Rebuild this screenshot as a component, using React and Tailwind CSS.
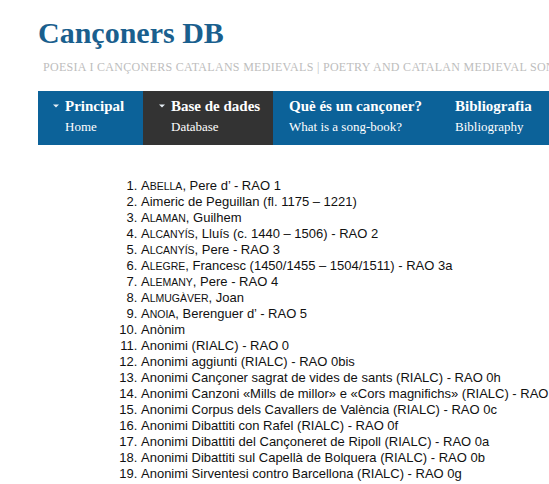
import React from 'react'

const entries = [
  { sc: 'Abella', rest: ', Pere d’ - RAO 1' },
  { text: 'Aimeric de Peguillan (fl. 1175 – 1221)' },
  { sc: 'Alaman', rest: ', Guilhem' },
  { sc: 'Alcanyís', rest: ', Lluís (c. 1440 – 1506) - RAO 2' },
  { sc: 'Alcanyís', rest: ', Pere - RAO 3' },
  { sc: 'Alegre', rest: ', Francesc (1450/1455 – 1504/1511) - RAO 3a' },
  { sc: 'Alemany', rest: ', Pere - RAO 4' },
  { sc: 'Almugàver', rest: ', Joan' },
  { sc: 'Anoia', rest: ', Berenguer d’ - RAO 5' },
  { text: 'Anònim' },
  { text: 'Anonimi (RIALC) - RAO 0' },
  { text: 'Anonimi aggiunti (RIALC) - RAO 0bis' },
  { text: 'Anonimi Cançoner sagrat de vides de sants (RIALC) - RAO 0h' },
  { text: 'Anonimi Canzoni «Mills de millor» e «Cors magnifichs» (RIALC) - RAO 0e' },
  { text: 'Anonimi Corpus dels Cavallers de València (RIALC) - RAO 0c' },
  { text: 'Anonimi Dibattiti con Rafel (RIALC) - RAO 0f' },
  { text: 'Anonimi Dibattiti del Cançoneret de Ripoll (RIALC) - RAO 0a' },
  { text: 'Anonimi Dibattiti sul Capellà de Bolquera (RIALC) - RAO 0b' },
  { text: 'Anonimi Sirventesi contro Barcellona (RIALC) - RAO 0g' },
]

const menu = [
  { ca: 'Principal', en: 'Home', arrow: true, width: 'w-[105px] pl-[15px]' },
  { ca: 'Base de dades', en: 'Database', arrow: true, active: true, width: 'w-[130px] pl-4' },
  { ca: 'Què és un cançoner?', en: 'What is a song-book?', width: 'w-[166px] pl-4' },
  { ca: 'Bibliografia', en: 'Bibliography', width: 'w-[110px] pl-4' },
]

function Arrow() {
  return (
    <svg width="6" height="4" viewBox="0 0 6 4" className="shrink-0">
      <path d="M0 0.5 L6 0.5 L3 3.5 Z" fill="#e6eef4" />
    </svg>
  )
}

function MenuItem({ item }) {
  return (
    <div className={`shrink-0 pt-[5px] pb-[7px] ${item.width} ${item.active ? 'bg-[#333333]' : ''}`}>
      <div className="flex items-center gap-[6px] text-[15px] leading-[20px] font-bold text-white">
        {item.arrow && <Arrow />}
        <span>{item.ca}</span>
      </div>
      <div className={`text-[13px] leading-[22px] text-white ${item.arrow ? 'pl-[12px]' : ''}`}>
        {item.en}
      </div>
    </div>
  )
}

// small caps drawn by hand: first letter full size, rest as smaller capitals
function SmallCaps({ word }) {
  return (
    <>
      {word[0]}
      <span className="text-[10.5px] uppercase">{word.slice(1)}</span>
    </>
  )
}

export default function App() {
  return (
    <div className="w-[549px] h-[484px] overflow-hidden bg-white">
      {/* Header */}
      <div className="pl-[38px] pt-4 whitespace-nowrap font-['Liberation_Serif','Times_New_Roman',serif]">
        <h1 className="text-[30px] leading-[34px] font-bold text-[#1a5f8e]">Cançoners DB</h1>
        <div className="mt-[10px] ml-[5px] text-[12px] leading-[14px] tracking-[0.3px] text-[#bdbdbd]">
          POESIA I CANÇONERS CATALANS MEDIEVALS | POETRY AND CATALAN MEDIEVAL SONG-BOOKS
        </div>
      </div>

      {/* Navigation */}
      <div className="mt-[17px] ml-[38px] flex bg-[#0c6299] whitespace-nowrap font-['Liberation_Serif','Times_New_Roman',serif]">
        {menu.map((item, i) => (
          <MenuItem key={i} item={item} />
        ))}
      </div>

      {/* Authors list */}
      <ol className="mt-[33px] pl-[141px] list-decimal list-outside text-[13px] leading-[16px] text-[#111111] font-['Liberation_Sans',Arial,sans-serif] whitespace-nowrap">
        {entries.map((e, i) => (
          <li key={i}>
            {e.sc ? (
              <>
                <SmallCaps word={e.sc} />
                {e.rest}
              </>
            ) : (
              e.text
            )}
          </li>
        ))}
      </ol>
    </div>
  )
}
